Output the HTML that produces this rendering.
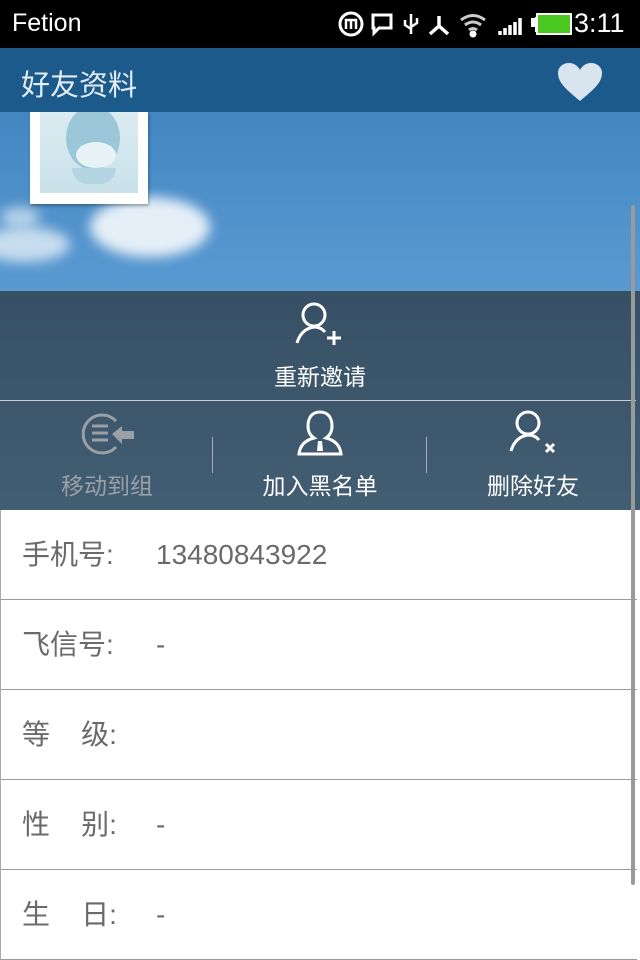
<!DOCTYPE html>
<html><head><meta charset="utf-8"><style>
body{margin:0;width:640px;height:960px;overflow:hidden;position:relative;font-family:"Liberation Sans","Noto Sans CJK SC",sans-serif;background:#fff}
.abs{position:absolute}
#sb{top:0;left:0;width:640px;height:48px;background:#000;color:#fff}
#tb{top:48px;left:0;width:640px;height:64px;background:#1c5a8c;color:#e4edf5;font-size:29px}
#sky{top:112px;left:0;width:640px;height:398px;background:linear-gradient(180deg,#4286c2 0%,#5898d0 40%,#6aa6d8 100%)}
.cloud{background:rgba(255,255,255,.85);border-radius:50%;filter:blur(6px)}
#ov{top:291px;left:0;width:640px;height:219px;background:linear-gradient(180deg,rgba(52,74,92,.93),rgba(62,86,104,.9))}
.lbl{font-size:23px;color:#fff;text-align:center;width:214px}
.row{left:0;width:636px;height:89px;border-bottom:1px solid #9a9a9a;border-left:1px solid #aaa;font-size:28px;color:#6a6a6a;line-height:89px;background:#fff}
.row span{position:absolute;left:21px}
.row b{font-weight:normal;position:absolute;left:155px}
</style></head><body>
<div id="sky" class="abs">
<div class="abs cloud" style="left:90px;top:85px;width:120px;height:60px"></div>
<div class="abs cloud" style="left:-20px;top:115px;width:90px;height:35px;opacity:.8"></div>
<div class="abs cloud" style="left:0px;top:95px;width:40px;height:20px;opacity:.7"></div>
<div class="abs" style="left:30px;top:0;width:118px;height:92px;background:#fff;box-shadow:1px 2px 3px rgba(0,0,0,.3)">
<div class="abs" style="left:10px;top:0;width:98px;height:81px;background:linear-gradient(#dbecf1,#c9e1ea)">
<div class="abs" style="left:26px;top:-6px;width:54px;height:64px;border-radius:50%;background:#9cc7d8"></div>
<div class="abs" style="left:36px;top:30px;width:40px;height:26px;border-radius:50%;background:#e6f2f5"></div>
<div class="abs" style="left:32px;top:56px;width:44px;height:16px;background:#b3d5e2;border-radius:0 0 22px 22px"></div>
</div></div>
<div class="abs" style="left:178px;top:-26px;font-size:28px;color:#fff;letter-spacing:2px">13480843922</div>
</div>
<div id="sb" class="abs">
<div class="abs" style="left:12px;top:9px;font-size:25px">Fetion</div>
<svg class="abs" style="left:335px;top:8px" width="210" height="32" viewBox="0 0 210 32" fill="none" stroke="#fff" stroke-width="3">
<circle cx="16" cy="16" r="11"/><path d="M11 21v-9h10v9M16 12v9" stroke-width="2.5"/>
<path d="M38 7h18v13h-12l-5 5v-5h-1z"/>
<path d="M76 6v20M70 12v5l6 4M82 10v5l-6 4" stroke-width="2.5"/>
<path d="M104 8v10l-9 8M104 18l9 8" stroke-width="3.5"/>
<path d="M126 12q12-9 24 0M130 17q8-6 16 0M134 22q4-3 8 0" stroke="#ccc"/><circle cx="138" cy="26" r="2" fill="#fff"/>
<path d="M165 27v-4M170 27v-7M175 27v-10M180 27v-13M185 27v-17" stroke-width="3.5"/>
<rect x="200" y="9" width="10" height="15" fill="#fff" stroke="none"/>
</svg>
<div class="abs" style="left:536px;top:13px;width:32px;height:18px;border:2px solid #fff;background:#4cc920"></div>
<div class="abs" style="left:531px;top:18px;width:4px;height:9px;background:#fff"></div>
<div class="abs" style="left:574px;top:8px;font-size:27px">3:11</div>
</div>
<div id="tb" class="abs"><div class="abs" style="left:21px;top:14px">好友资料</div>
<svg class="abs" style="left:557px;top:14px" width="46" height="40" viewBox="0 0 46 40"><path d="M23 39C10 28 1 21 1 11 1 5 6 1 12 1c5 0 9 3 11 7 2-4 6-7 11-7 6 0 11 4 11 10 0 10-9 17-22 28z" fill="#d8e4ee"/></svg></div>
<div id="ov" class="abs">
<svg class="abs" style="left:294px;top:8px" width="50" height="50" viewBox="0 0 50 50" fill="none" stroke="#fff" stroke-width="3"><circle cx="20" cy="16" r="11"/><path d="M3 44q4-14 17-16q7 0 11 5"/><path d="M40 32v14M33 39h14"/></svg>
<div class="abs lbl" style="left:213px;top:67px">重新邀请</div>
<div class="abs" style="left:0;top:109px;width:636px;height:1px;background:#c8d0d6"></div>
<svg class="abs" style="left:78px;top:118px" width="58" height="48" viewBox="0 0 58 48" fill="none" stroke="#9aa0a4" stroke-width="3"><path d="M38 12A19 19 0 1 0 38 38"/><path d="M14 17h16M14 24h16M14 31h16"/><path d="M34 25l10-8v5h12v8h-12v5z" fill="#9aa0a4" stroke="none"/></svg>
<div class="abs lbl" style="left:0;top:176px;color:#9aa0a4">移动到组</div>
<div class="abs" style="left:212px;top:146px;width:1px;height:36px;background:#aab"></div>
<svg class="abs" style="left:294px;top:118px" width="52" height="48" viewBox="0 0 52 48" fill="none" stroke="#fff" stroke-width="3"><path d="M26 3c-9 0-12 7-12 14 0 6 3 10 6 12-8 2-14 7-15 16h42c-1-9-7-14-15-16 3-2 6-6 6-12 0-7-3-14-12-14z"/><path d="M24 32h4l1 10h-6z" fill="#fff" stroke="none"/></svg>
<div class="abs lbl" style="left:213px;top:176px">加入黑名单</div>
<div class="abs" style="left:426px;top:146px;width:1px;height:36px;background:#aab"></div>
<svg class="abs" style="left:508px;top:116px" width="52" height="50" viewBox="0 0 52 50" fill="none" stroke="#fff" stroke-width="3"><circle cx="20" cy="16" r="11"/><path d="M3 44q4-14 17-16q7 0 11 5"/><path d="M38 37l8 8M46 37l-8 8"/></svg>
<div class="abs lbl" style="left:426px;top:176px">删除好友</div>
</div>
<div class="abs row" style="top:510px"><span>手机号:</span><b>13480843922</b></div>
<div class="abs row" style="top:600px"><span>飞信号:</span><b>-</b></div>
<div class="abs row" style="top:690px"><span>等&nbsp;&nbsp;&nbsp;&nbsp;级:</span></div>
<div class="abs row" style="top:780px"><span>性&nbsp;&nbsp;&nbsp;&nbsp;别:</span><b>-</b></div>
<div class="abs row" style="top:870px"><span>生&nbsp;&nbsp;&nbsp;&nbsp;日:</span><b>-</b></div>
<div class="abs" style="left:631px;top:205px;width:4px;height:680px;background:#9a9a9a;border-radius:2px"></div>
</body></html>
